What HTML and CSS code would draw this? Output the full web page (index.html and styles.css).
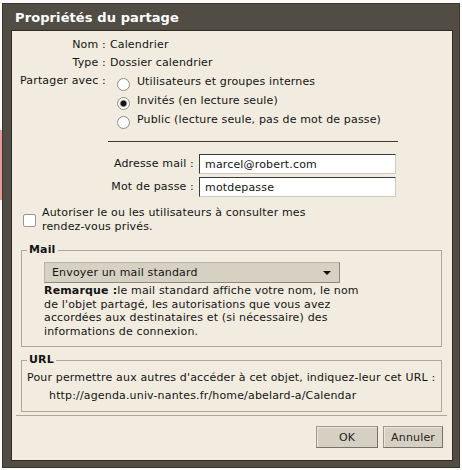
FILE: index.html
```html
<!DOCTYPE html>
<html lang="fr">
<head>
<meta charset="utf-8">
<title>Propriétés du partage</title>
<link rel="stylesheet" href="styles.css">
</head>
<body>
<div class="dialog">
  <div class="titlebar">Propriétés du partage</div>
  <div class="content">
    <div class="info">
      <span class="label">Nom :</span><span class="value">Calendrier</span>
      <span class="label">Type :</span><span class="value">Dossier calendrier</span>
      <span class="label">Partager avec :</span>
      <div class="radios">
        <label class="radio"><span class="dot"></span>Utilisateurs et groupes internes</label>
        <label class="radio"><span class="dot checked"></span>Invités (en lecture seule)</label>
        <label class="radio"><span class="dot"></span>Public (lecture seule, pas de mot de passe)</label>
      </div>
    </div>
    <div class="rule-short"></div>
    <div class="creds">
      <span class="label">Adresse mail :</span><input class="field" type="text" value="marcel@robert.com">
      <span class="label">Mot de passe :</span><input class="field" type="text" value="motdepasse">
    </div>
    <div class="check-row">
      <span class="checkbox"></span>
      <span class="check-text">Autoriser le ou les utilisateurs à consulter mes<br>rendez-vous privés.</span>
    </div>
    <fieldset class="group mail">
      <legend>Mail</legend>
      <div class="mail-body">
        <div class="select"><span>Envoyer un mail standard</span><span class="arrow"></span></div>
        <p class="note"><b>Remarque :</b>le mail standard affiche votre nom, le nom<br>de l'objet partagé, les autorisations que vous avez<br>accordées aux destinataires et (si nécessaire) des<br>informations de connexion.</p>
      </div>
    </fieldset>
    <fieldset class="group url">
      <legend>URL</legend>
      <div class="url-line">Pour permettre aux autres d'accéder à cet objet, indiquez-leur cet URL :</div>
      <div class="url-line link">http://agenda.univ-nantes.fr/home/abelard-a/Calendar</div>
    </fieldset>
    <div class="rule"></div>
    <div class="buttons">
      <button class="btn btn-ok" type="button">OK</button>
      <button class="btn" type="button">Annuler</button>
    </div>
  </div>
</div>
</body>
</html>
```
FILE: styles.css
```css
* { box-sizing: border-box; }
html, body { margin: 0; }
body {
  width: 462px;
  height: 470px;
  overflow: hidden;
  padding: 3px 0 0 2px;
  background: linear-gradient(#e79a98, #e79a98) 0 130px / 2px 70px no-repeat, #fbfbfc;
  font-family: "DejaVu Sans", Verdana, sans-serif;
  font-size: 11px;
  letter-spacing: 0.16px;
  color: #141414;
}
.dialog {
  width: 458px;
  height: 465px;
  display: flex;
  flex-direction: column;
  background: #514d45;
  border: 1px solid #3a3731;
  padding: 0 6px 6px 8px;
}
.titlebar {
  height: 26px;
  padding: 2px 0 0 4px;
  line-height: 24px;
  font-weight: bold;
  font-size: 13px;
  letter-spacing: 0.1px;
  color: #ffffff;
  white-space: nowrap;
}
.content {
  flex: 1;
  background: #f1ecdf;
  border: 1px solid #2f2c27;
  display: flex;
  flex-direction: column;
  white-space: nowrap;
}
.info {
  display: grid;
  grid-template-columns: auto auto;
  justify-content: start;
  column-gap: 4px;
  padding: 5px 0 0 8px;
}
.label { text-align: right; line-height: 18px; }
.value { line-height: 18px; }
.radios { display: flex; flex-direction: column; }
.radio {
  display: flex;
  height: 19px;
  line-height: 19px;
  padding-left: 7px;
}
.dot {
  flex: none;
  width: 13px;
  height: 13px;
  margin: 6px 7px 0 0;
  border-radius: 50%;
  border: 1px solid #8f8b84;
  background: #ffffff;
}
.dot.checked {
  background: radial-gradient(circle, #111 0, #111 2.2px, #7a7770 3px, #fff 4.2px);
}
.rule-short {
  height: 1px;
  width: 290px;
  background: #3d3a34;
  margin: 12px 0 0 96px;
}
.creds {
  display: grid;
  grid-template-columns: auto 197px;
  justify-content: end;
  align-items: center;
  column-gap: 5px;
  row-gap: 3px;
  width: 288px;
  margin: 12px 0 0 96px;
}
.field {
  height: 20px;
  width: 197px;
  padding: 0 5px;
  margin: 0;
  border: 1px solid;
  border-color: #3a3a3a #cfcabd #cfcabd #3a3a3a;
  background: #ffffff;
  font: inherit;
  letter-spacing: inherit;
  color: #141414;
  outline: none;
}
.check-row {
  display: flex;
  align-items: center;
  gap: 6px;
  margin-top: 9px;
  padding-left: 11px;
}
.checkbox {
  flex: none;
  width: 13px;
  height: 13px;
  border: 1px solid #9b978f;
  border-radius: 2px;
  background: #ffffff;
}
.check-text { line-height: 14px; }
.group {
  margin: 9px 10px 0 9px;
  min-width: 0;
  border: 1px solid #aca796;
  padding: 5px 8px 8px 5px;
}
.group legend {
  padding: 0 2px;
  font-weight: bold;
  line-height: 14px;
}
.mail-body { padding-left: 17px; }
.select {
  display: flex;
  align-items: center;
  justify-content: space-between;
  width: 296px;
  height: 21px;
  padding: 0 8px 0 7px;
  background: #d6d1c2;
  border: 1px solid;
  border-color: #b9b4a5 #8d887b #8d887b #b9b4a5;
}
.arrow {
  width: 0;
  height: 0;
  border-left: 4px solid transparent;
  border-right: 4px solid transparent;
  border-top: 4px solid #111;
}
.note {
  margin: 1px 0 0;
  line-height: 13.5px;
}
.group.url {
  margin-top: 6px;
  padding: 2px 5px 6px 5px;
}
.url-line { line-height: 18px; }
.link { padding-left: 22px; }
.rule {
  height: 1px;
  background: #aca796;
  margin: 3px 5px 0 4px;
}
.buttons {
  display: flex;
  justify-content: flex-end;
  gap: 5px;
  margin: 10px 9px 0 0;
}
.btn {
  height: 22px;
  padding: 0 7px;
  font: inherit;
  letter-spacing: inherit;
  color: #1e1e1e;
  background: #d5d0c1;
  border: 1px solid;
  border-color: #9d998e #76726a #76726a #9d998e;
  box-shadow: inset 1px 1px 0 #ebe7dc;
}
.btn-ok { min-width: 62px; }
```
